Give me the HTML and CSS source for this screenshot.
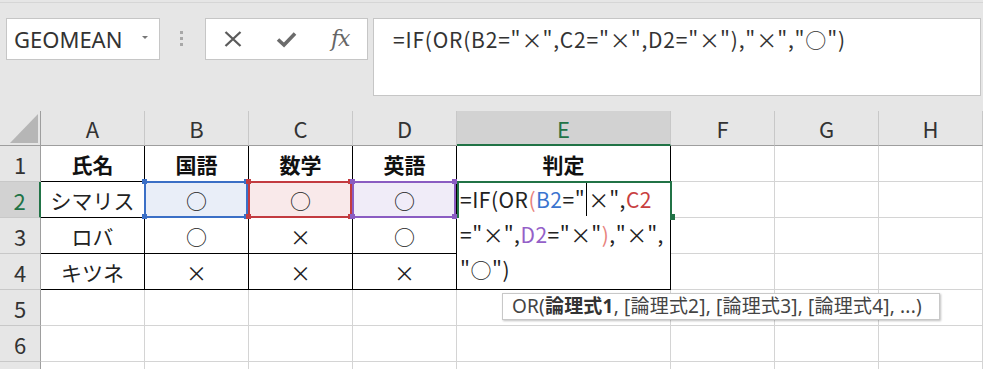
FILE: index.html
```html
<!DOCTYPE html>
<html lang="ja">
<head>
    <meta charset="UTF-8">
    <title>判定シート</title>
    <link rel="stylesheet" href="styles.css">
</head>
<body>

    <div class="toolbar">
        <div class="name-box">
            <span>GEOMEAN</span>
            <i class="drop"></i>
        </div>
        <div class="grip"><i></i><i></i><i></i></div>
        <div class="fx-group">
            <div class="fx-btn">
                <svg width="18" height="16" viewBox="0 0 18 16">
                    <path d="M1.5 1 L16.5 15 M16.5 1 L1.5 15" stroke="#5b5b5b" stroke-width="2.3" fill="none"/>
                </svg>
            </div>
            <div class="fx-btn">
                <svg width="21" height="17" viewBox="0 0 21 17">
                    <path d="M2 8.5 L8 14 L19 2.5" stroke="#6b6b6b" stroke-width="3.6" fill="none"/>
                </svg>
            </div>
            <div class="fx-btn"><span class="fx">fx</span></div>
        </div>
        <div class="formula-bar">=IF(OR(B2="<span class="fw">×</span>",C2="<span class="fw">×</span>",D2="<span class="fw">×</span>"),"<span class="fw">×</span>","○")</div>
    </div>

    <div class="sheet">
        <!-- column headers -->
        <div class="corner"><div class="tri"></div></div>
        <div class="ch">A</div>
        <div class="ch">B</div>
        <div class="ch">C</div>
        <div class="ch">D</div>
        <div class="ch sel-col">E</div>
        <div class="ch">F</div>
        <div class="ch">G</div>
        <div class="ch">H</div>

        <!-- row 1 -->
        <div class="rh">1</div>
        <div class="c t bold">氏名</div>
        <div class="c t bold">国語</div>
        <div class="c t bold">数学</div>
        <div class="c t bold">英語</div>
        <div class="c t bold">判定</div>
        <div class="c"></div>
        <div class="c"></div>
        <div class="c"></div>

        <!-- row 2 -->
        <div class="rh sel-row">2</div>
        <div class="c t">シマリス</div>
        <div class="c t ref-cell blue"><span class="ref"></span>○</div>
        <div class="c t ref-cell red"><span class="ref"></span>○</div>
        <div class="c t ref-cell purple"><span class="ref"></span>○</div>
        <div class="c t edit-cell">
            <div class="editor">
                =IF(OR<span class="pk">(</span><span class="bl">B2</span>="<span class="caret"></span><span class="fw">×</span>",<span class="rd">C2</span><br>
                ="<span class="fw">×</span>",<span class="pu">D2</span>="<span class="fw">×</span>"<span class="pk">)</span>,"<span class="fw">×</span>",<br>
                "○")
            </div>
            <span class="active"></span>
        </div>
        <div class="c"></div>
        <div class="c"></div>
        <div class="c"></div>

        <!-- row 3 -->
        <div class="rh">3</div>
        <div class="c t">ロバ</div>
        <div class="c t">○</div>
        <div class="c t">×</div>
        <div class="c t">○</div>
        <div class="c t"></div>
        <div class="c"></div>
        <div class="c"></div>
        <div class="c"></div>

        <!-- row 4 -->
        <div class="rh">4</div>
        <div class="c t">キツネ</div>
        <div class="c t">×</div>
        <div class="c t">×</div>
        <div class="c t">×</div>
        <div class="c t"></div>
        <div class="c"></div>
        <div class="c"></div>
        <div class="c"></div>

        <!-- rows 5 to 7 -->
        <div class="rh">5</div>
        <div class="c"></div><div class="c"></div><div class="c"></div><div class="c"></div>
        <div class="c"></div><div class="c"></div><div class="c"></div><div class="c"></div>

        <div class="rh">6</div>
        <div class="c"></div><div class="c"></div><div class="c"></div><div class="c"></div>
        <div class="c"></div><div class="c"></div><div class="c"></div><div class="c"></div>

        <div class="rh"></div>
        <div class="c"></div><div class="c"></div><div class="c"></div><div class="c"></div>
        <div class="c"></div><div class="c"></div><div class="c"></div><div class="c"></div>

        <div class="tip">OR(<b>論理式1</b>, [論理式2], [論理式3], [論理式4], ...)</div>
    </div>

</body>
</html>
```

FILE: styles.css
```css
*,
::after,
::before {
    margin: 0;
    padding: 0;
    box-sizing: border-box;
}

html,
body {
    height: 100%;
    overflow: hidden;
}

body {
    background-color: #e6e6e6;
    font-family: "Noto Sans CJK JP", "Noto Sans", sans-serif;
    color: #222;
}

/* formula bar area */
.toolbar {
    height: 109px;
    margin-top: 2px;
    border-top: 1px solid #d6d6d6;
    display: flex;
    align-items: flex-start;
    padding: 15px 2px 0 6px;
}

.name-box {
    width: 154px;
    height: 42px;
    background-color: #fff;
    border: 1px solid #c6c6c6;
    display: flex;
    align-items: center;
    justify-content: space-between;
    padding: 0 11px 0 7px;
    font-family: "Noto Sans", sans-serif;
    font-size: 22px;
    color: #333;
}

.drop {
    width: 0;
    height: 0;
    border-left: 3px solid transparent;
    border-right: 3px solid transparent;
    border-top: 3px solid #777;
    margin-bottom: 4px;
}

.grip {
    width: 45px;
    display: flex;
    flex-direction: column;
    align-items: center;
    gap: 3px;
    padding: 13px 3px 0 0;
}

.grip i {
    width: 3px;
    height: 3px;
    background-color: #a8a8a8;
}

.fx-group {
    width: 163px;
    height: 42px;
    background-color: #fff;
    border: 1px solid #c6c6c6;
    display: flex;
}

.fx-btn {
    flex: 1;
    display: flex;
    align-items: center;
    justify-content: center;
}

.fx {
    font-family: "DejaVu Serif", serif;
    font-style: italic;
    font-size: 22px;
    color: #666;
    margin-bottom: 2px;
    letter-spacing: -1px;
}

.formula-bar {
    flex: 1;
    margin-left: 5px;
    height: 78px;
    background-color: #fff;
    border: 1px solid #c6c6c6;
    padding: 5px 0 0 19px;
    font-size: 21px;
    line-height: 30px;
    letter-spacing: 0.8px;
    color: #333;
    white-space: nowrap;
}

.fw {
    display: inline-block;
    width: 1em;
    text-align: center;
}

/* grid */
.sheet {
    position: relative;
    display: grid;
    grid-template-columns: 41px repeat(4, 104px) 214px repeat(3, 104px);
    grid-template-rows: 35px repeat(7, 36px);
}

.corner {
    display: flex;
    justify-content: flex-end;
    align-items: flex-end;
    padding: 0 2px 2px 0;
    border-right: 1px solid #9e9e9e;
    border-bottom: 1px solid #9e9e9e;
}

.tri {
    width: 28px;
    height: 29px;
    background-color: #b6b6b6;
    clip-path: polygon(100% 0, 100% 100%, 0 100%);
}

.ch,
.rh {
    display: flex;
    align-items: center;
    justify-content: center;
    font-size: 22px;
    color: #333;
    background-color: #e6e6e6;
}

.ch {
    border-right: 1px solid #c8c8c8;
    border-bottom: 1px solid #9e9e9e;
}

.rh {
    border-right: 1px solid #9e9e9e;
    border-bottom: 1px solid #c8c8c8;
}

.sel-col {
    background-color: #d2d2d2;
    color: #217346;
    border-bottom: 2px solid #217346;
}

.sel-row {
    background-color: #d2d2d2;
    color: #217346;
    border-right: 2px solid #217346;
}

.c {
    background-color: #fff;
    border-right: 1px solid #d4d4d4;
    border-bottom: 1px solid #d4d4d4;
    display: flex;
    align-items: center;
    justify-content: center;
    font-size: 21px;
    color: #222;
}

.c.t {
    border-right-color: #000;
    border-bottom-color: #000;
}

.bold {
    font-weight: 700;
    color: #111;
}

/* range highlight of the references in the formula */
.ref-cell {
    position: relative;
}

.blue {
    --rc: #3b6fc6;
    background-color: #e9eef8;
}

.red {
    --rc: #c33b40;
    background-color: #f9e9ea;
}

.purple {
    --rc: #8a5cc2;
    background-color: #f0ecf8;
}

.ref {
    position: absolute;
    left: -1px;
    top: -1px;
    width: 104px;
    height: 37px;
    border: 2px solid var(--rc);
    z-index: 1;
}

.ref::before {
    content: "";
    position: absolute;
    left: -4px;
    top: -4px;
    width: 5px;
    height: 5px;
    background-color: var(--rc);
    box-shadow: 102px 0 var(--rc), 0 35px var(--rc), 102px 35px var(--rc);
}

/* cell in edit mode */
.edit-cell {
    position: relative;
}

.editor {
    position: absolute;
    left: 0;
    top: 0;
    width: 213px;
    height: 107px;
    background-color: #fff;
    padding-left: 3px;
    font-size: 21px;
    line-height: 35px;
    letter-spacing: 0.5px;
    white-space: nowrap;
    color: #222;
    z-index: 2;
}

.caret {
    display: inline-block;
    width: 1px;
    height: 33px;
    background-color: #000;
    vertical-align: top;
    margin: 1px 1px 0;
}

.pk { color: #e8837d; }
.bl { color: #3b74cf; }
.rd { color: #c8403f; }
.pu { color: #9460c8; }

.active {
    position: absolute;
    left: 0;
    top: -1px;
    width: 215px;
    height: 37px;
    border: 2px solid #217346;
    border-bottom: none;
    z-index: 3;
}

.active::after {
    content: "";
    position: absolute;
    right: -5px;
    bottom: -2px;
    width: 5px;
    height: 6px;
    background-color: #217346;
}

/* function tooltip */
.tip {
    position: absolute;
    left: 502px;
    top: 182px;
    width: 438px;
    height: 27px;
    background-color: #fff;
    border: 1px solid #c8c8c8;
    box-shadow: 1px 1px 2px rgba(0, 0, 0, 0.25);
    padding-left: 9px;
    font-family: "Noto Sans", "Noto Sans CJK JP", sans-serif;
    font-size: 19px;
    line-height: 25px;
    letter-spacing: 0.2px;
    color: #444;
    white-space: nowrap;
    z-index: 4;
}

.tip b {
    color: #333;
}
```
